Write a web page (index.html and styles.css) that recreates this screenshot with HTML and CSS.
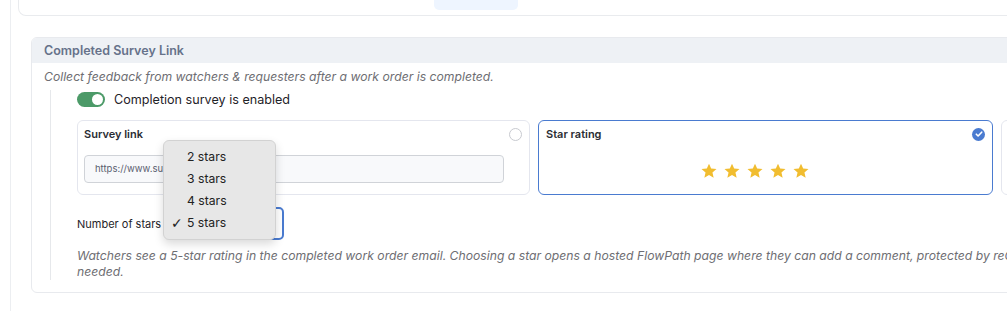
FILE: index.html
```html
<!DOCTYPE html>
<html lang="en">

<head>
	<meta charset="UTF-8">
	<meta name="viewport" content="width=device-width, initial-scale=1.0">
	<title>Completed Survey Link</title>
	<link rel="stylesheet" href="styles.css">
</head>

<body>
	<div class="page">
		<div class="topbar">
			<span class="tab-active"></span>
		</div>

		<div class="section">
			<div class="section-head">Completed Survey Link</div>
			<div class="section-body">
				<p class="hint">Collect feedback from watchers &amp; requesters after a work order is completed.</p>
				<div class="indent">
					<label class="toggle-row">
						<span class="toggle"><span class="knob"></span></span>
						Completion survey is enabled
					</label>

					<div class="choices">
						<div class="choice">
							<div class="choice-head">
								<span class="choice-title">Survey link</span>
								<span class="radio"></span>
							</div>
							<div class="url-input">https://www.survey.com</div>
						</div>
						<div class="choice selected">
							<div class="choice-head">
								<span class="choice-title">Star rating</span>
								<span class="radio checked">
									<svg viewBox="0 0 12 12" width="12" height="12"><path d="M3.3 6.2l1.8 1.8 3.6-3.8" fill="none" stroke="#fff" stroke-width="1.6" stroke-linecap="round" stroke-linejoin="round"/></svg>
								</span>
							</div>
							<div class="stars">
								<svg viewBox="0 0 24 24"><path d="M12 2.2l2.9 6.6 7.1.6-5.4 4.7 1.6 7-6.2-3.7-6.2 3.7 1.6-7L2 9.4l7.1-.6z"/></svg>
								<svg viewBox="0 0 24 24"><path d="M12 2.2l2.9 6.6 7.1.6-5.4 4.7 1.6 7-6.2-3.7-6.2 3.7 1.6-7L2 9.4l7.1-.6z"/></svg>
								<svg viewBox="0 0 24 24"><path d="M12 2.2l2.9 6.6 7.1.6-5.4 4.7 1.6 7-6.2-3.7-6.2 3.7 1.6-7L2 9.4l7.1-.6z"/></svg>
								<svg viewBox="0 0 24 24"><path d="M12 2.2l2.9 6.6 7.1.6-5.4 4.7 1.6 7-6.2-3.7-6.2 3.7 1.6-7L2 9.4l7.1-.6z"/></svg>
								<svg viewBox="0 0 24 24"><path d="M12 2.2l2.9 6.6 7.1.6-5.4 4.7 1.6 7-6.2-3.7-6.2 3.7 1.6-7L2 9.4l7.1-.6z"/></svg>
							</div>
						</div>
						<div class="choice"></div>
					</div>

					<div class="stars-row">
						<span class="stars-label">Number of stars</span>
						<div class="select-wrap">
							<div class="select">5 stars</div>
							<ul class="menu">
								<li>2 stars</li>
								<li>3 stars</li>
								<li>4 stars</li>
								<li class="current">5 stars</li>
							</ul>
						</div>
					</div>

					<p class="hint note">Watchers see a 5-star rating in the completed work order email. Choosing a star opens a hosted FlowPath page where they can add a comment, protected by reCAPTCHA. No extra setup needed.</p>
				</div>
			</div>
		</div>
	</div>
</body>

</html>
```

FILE: styles.css
```css
body {
	font-family: Inter, "Noto Sans", sans-serif;
	background-color: #fff;
	color: #1f2329;
	margin: 0;
	padding: 0;
	overflow: hidden;
}

.page {
	margin-left: 10px;
	border-left: 1px solid #eceef1;
	height: 311px;
	width: 1200px;
}

.topbar {
	margin-left: 7px;
	height: 16px;
	border: 1px solid #e9ebee;
	border-top: none;
	border-radius: 0 0 0 8px;
	box-sizing: border-box;
	padding-left: 415px;
}

.tab-active {
	display: block;
	width: 84px;
	height: 10px;
	background: #eef5ff;
	border-radius: 0 0 5px 5px;
}

.section {
	margin: 21px 0 0 20px;
	border: 1px solid #e8eaee;
	border-radius: 6px;
	overflow: hidden;
}

.section-head {
	background: #eef1f5;
	height: 25px;
	line-height: 26px;
	padding-left: 12px;
	font-size: 12.5px;
	font-weight: 600;
	color: #66728a;
}

.section-body {
	padding: 0 12px 12px;
}

.hint {
	margin: 0;
	font-size: 12.2px;
	font-style: italic;
	color: #6e6e73;
	line-height: 16px;
}

.section-body > .hint {
	padding: 6px 0 5px;
}

.indent {
	margin-left: 6px;
	border-left: 1px solid #e6e8eb;
	padding: 0 0 0 26px;
}

.toggle-row {
	display: flex;
	align-items: center;
	gap: 9px;
	font-size: 12.6px;
	color: #1f2329;
	height: 19px;
}

.toggle {
	width: 28px;
	height: 15px;
	border-radius: 8px;
	background: #4c9a68;
	position: relative;
}

.knob {
	position: absolute;
	right: 2px;
	top: 2px;
	width: 11px;
	height: 11px;
	border-radius: 50%;
	background: #fff;
}

.choices {
	display: flex;
	gap: 8px;
	margin-top: 11px;
}

.choice {
	flex: 0 0 453px;
	height: 75px;
	box-sizing: border-box;
	border: 1px solid #e4e6ee;
	border-radius: 6px;
	padding: 6px 6px 0 6px;
}

.choice.selected {
	flex-basis: 455px;
	border-color: #4a7bd0;
	padding-left: 7px;
}

.choice-head {
	display: flex;
	justify-content: space-between;
	align-items: center;
	height: 14px;
}

.choice-title {
	font-size: 11px;
	font-weight: 600;
	color: #2a2d33;
}

.radio {
	width: 11px;
	height: 11px;
	border: 1px solid #c8cad0;
	border-radius: 50%;
	margin-right: 1px;
	display: flex;
	align-items: center;
	justify-content: center;
}

.radio.checked {
	width: 13px;
	height: 13px;
	border: none;
	background: #4a7bd0;
}

.url-input {
	margin-top: 14px;
	width: 420px;
	height: 28px;
	box-sizing: border-box;
	border: 1px solid #d0d3d8;
	border-radius: 4px;
	background: #f8f9fb;
	font-size: 9.5px;
	color: #5a6070;
	line-height: 26px;
	padding-left: 10px;
	overflow: hidden;
}

.stars {
	display: flex;
	justify-content: center;
	gap: 5px;
	margin-top: 21px;
	padding-right: 22px;
}

.stars svg {
	width: 18px;
	height: 18px;
	fill: #f1bd30;
}

.stars-row {
	display: flex;
	align-items: center;
	margin-top: 12px;
	height: 33px;
}

.stars-label {
	width: 95px;
	font-size: 11px;
	color: #1f2329;
	white-space: nowrap;
}

.select-wrap {
	position: relative;
}

.select {
	width: 112px;
	height: 33px;
	box-sizing: border-box;
	border: 2px solid #4a7bd0;
	border-radius: 5px;
	font-size: 12px;
	line-height: 29px;
	padding-left: 14px;
	color: #1f2329;
}

.menu {
	position: absolute;
	left: -9px;
	bottom: 0;
	width: 113px;
	margin: 0;
	padding: 5px 0;
	list-style: none;
	background: #e7e7e7;
	border: 1px solid #d2d2d2;
	border-radius: 6px;
	box-shadow: 0 4px 10px rgba(0, 0, 0, 0.15);
	box-sizing: border-box;
}

.menu li {
	font-size: 12.2px;
	line-height: 22px;
	padding-left: 23px;
	color: #222;
	position: relative;
}

.menu li.current::before {
	content: "✓";
	position: absolute;
	left: 7px;
	font-family: "DejaVu Sans", sans-serif;
	font-size: 14px;
	font-weight: 600;
}

.note {
	width: 1085px;
	margin-top: 8px;
}
```
